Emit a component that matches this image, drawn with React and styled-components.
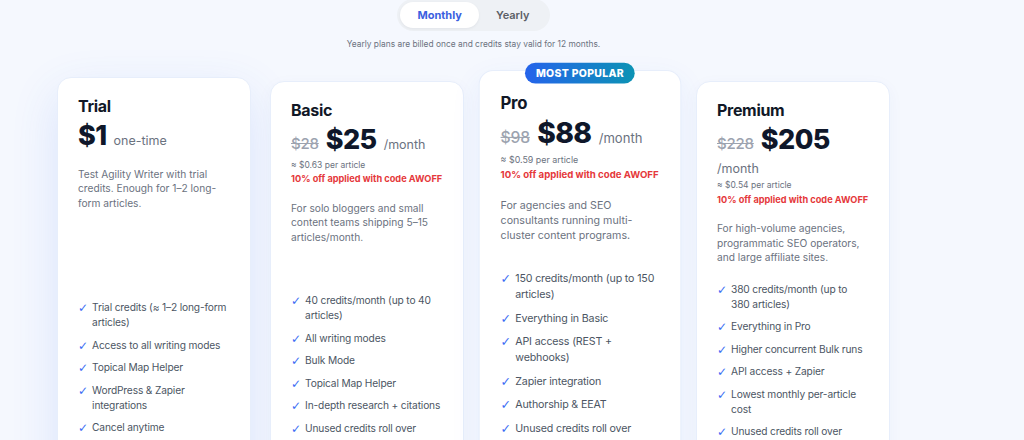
import React from 'react';
import styled, { createGlobalStyle } from 'styled-components';

const Global = createGlobalStyle`
  html, body { margin: 0; padding: 0; background: #f5f8fe; }
  body {
    font-family: Inter, "Noto Sans", sans-serif;
    -webkit-font-smoothing: antialiased;
    overflow: hidden;
  }
`;

const Page = styled.div`
  width: 1024px;
  height: 440px;
  overflow: hidden;
  background: #f5f8fe;
`;

const Main = styled.main`
  width: 833px;
  margin-left: 57px;
  display: flex;
  flex-direction: column;
  align-items: center;
`;

const Toggle = styled.div`
  display: flex;
  margin-top: -1px;
  padding: 3px;
  background: #eef1f5;
  border-radius: 16px;
`;

const ToggleBtn = styled.button`
  height: 26px;
  padding: 0 17px;
  border: none;
  border-radius: 13px;
  font-family: Inter, sans-serif;
  font-size: 11px;
  font-weight: ${p => (p.$active ? 700 : 600)};
  color: ${p => (p.$active ? '#3b5fe0' : '#5b5f66')};
  background: ${p => (p.$active ? '#ffffff' : 'transparent')};
  box-shadow: ${p => (p.$active ? '0 1px 3px rgba(15,23,42,0.06)' : 'none')};
  cursor: pointer;
`;

const Note = styled.p`
  margin: 7px 0 0;
  font-size: 8.4px;
  line-height: 12px;
  color: #6b7280;
`;

const Grid = styled.div`
  margin-top: 31px;
  display: grid;
  grid-template-columns: repeat(4, 194px);
  column-gap: 19px;
  align-items: start;
`;

const Card = styled.div`
  position: relative;
  box-sizing: border-box;
  min-height: 500px;
  display: flex;
  flex-direction: column;
  padding: ${p => (p.$featured ? '20px' : '18px')} 20px 24px;
  background: #ffffff;
  border: 1px solid #e7eefb;
  border-radius: 14px;
  transform-origin: top center;
  transform: ${p =>
    p.$featured ? 'translateY(-11px) scale(1.045)' : p.$hover ? 'translateY(-4px)' : 'none'};
  box-shadow: ${p =>
    p.$hover
      ? '0 16px 48px rgba(59,108,244,0.14)'
      : p.$featured
      ? '0 10px 30px rgba(37,99,235,0.07)'
      : '0 4px 16px rgba(30,64,175,0.04)'};
`;

const Badge = styled.span`
  position: absolute;
  top: -8px;
  left: 50%;
  transform: translateX(-50%);
  padding: 4px 10.5px;
  border-radius: 999px;
  background: linear-gradient(90deg, #2563eb 0%, #0c93b4 100%);
  color: #ffffff;
  font-size: 10px;
  line-height: 12px;
  font-weight: 800;
  letter-spacing: 0.3px;
  white-space: nowrap;
`;

const PlanName = styled.h3`
  margin: 0;
  font-size: 16px;
  line-height: 20px;
  font-weight: 700;
  letter-spacing: -0.3px;
  color: #111827;
`;

const PriceRow = styled.div`
  margin-top: 5px;
  display: flex;
  flex-wrap: wrap;
  align-items: baseline;
  column-gap: 7px;
  row-gap: 6.5px;
`;

const OldPrice = styled.span`
  font-size: 15px;
  line-height: 20px;
  font-weight: 500;
  color: #9ca3af;
  text-decoration: line-through;
  letter-spacing: -0.2px;
`;

const Price = styled.span`
  font-size: 27px;
  line-height: 30px;
  font-weight: 800;
  color: #0f172a;
  letter-spacing: -0.6px;
`;

const Unit = styled.span`
  font-size: 12.5px;
  line-height: 14px;
  color: #6b7280;
`;

const PerArticle = styled.div`
  margin-top: 3.5px;
  font-size: 8.5px;
  line-height: 12px;
  color: #6b7280;
`;

const Promo = styled.div`
  margin-top: 1.5px;
  font-size: 9.2px;
  line-height: 13px;
  font-weight: 700;
  color: #e5383b;
  white-space: nowrap;
`;

const Desc = styled.p`
  margin: 15.5px 0 0;
  font-size: 10.2px;
  line-height: 14.5px;
  color: #6b7280;
`;

const Features = styled.ul`
  list-style: none;
  margin: ${p => p.$top}px 0 0;
  padding: 0;
  display: flex;
  flex-direction: column;
  gap: 7.5px;
`;

const Feature = styled.li`
  display: flex;
  gap: 4px;
  font-size: 10.2px;
  line-height: 15px;
  letter-spacing: -0.15px;
  color: #4b5563;
`;

const Check = styled.span`
  flex: 0 0 9.5px;
  font-family: "DejaVu Sans", sans-serif;
  font-size: 12px;
  line-height: 15px;
  letter-spacing: 0;
  color: #3b6cf4;
  transform: translateY(1px);
`;

const plans = [
  {
    name: 'Trial',
    price: '$1',
    unit: 'one-time',
    desc: 'Test Agility Writer with trial credits. Enough for 1–2 long-form articles.',
    top: 90,
    hover: true,
    features: [
      'Trial credits (≈ 1–2 long-form articles)',
      'Access to all writing modes',
      'Topical Map Helper',
      'WordPress & Zapier integrations',
      'Cancel anytime',
    ],
  },
  {
    name: 'Basic',
    old: '$28',
    price: '$25',
    unit: '/month',
    per: '≈ $0.63 per article',
    promo: '10% off applied with code AWOFF',
    desc: 'For solo bloggers and small content teams shipping 5–15 articles/month.',
    top: 49,
    features: [
      '40 credits/month (up to 40 articles)',
      'All writing modes',
      'Bulk Mode',
      'Topical Map Helper',
      'In-depth research + citations',
      'Unused credits roll over',
    ],
  },
  {
    name: 'Pro',
    old: '$98',
    price: '$88',
    unit: '/month',
    per: '≈ $0.59 per article',
    promo: '10% off applied with code AWOFF',
    desc: 'For agencies and SEO consultants running multi-cluster content programs.',
    top: 27,
    featured: true,
    features: [
      '150 credits/month (up to 150 articles)',
      'Everything in Basic',
      'API access (REST + webhooks)',
      'Zapier integration',
      'Authorship & EEAT',
      'Unused credits roll over',
    ],
  },
  {
    name: 'Premium',
    old: '$228',
    price: '$205',
    unit: '/month',
    per: '≈ $0.54 per article',
    promo: '10% off applied with code AWOFF',
    desc: 'For high-volume agencies, programmatic SEO operators, and large affiliate sites.',
    top: 17,
    features: [
      '380 credits/month (up to 380\u00A0articles)',
      'Everything in Pro',
      'Higher concurrent Bulk runs',
      'API access + Zapier',
      'Lowest monthly per-article cost',
      'Unused credits roll over',
    ],
  },
];

export default function App() {
  return (
    <Page>
      <Global />
      <Main>
        <Toggle>
          <ToggleBtn $active>Monthly</ToggleBtn>
          <ToggleBtn>Yearly</ToggleBtn>
        </Toggle>
        <Note>Yearly plans are billed once and credits stay valid for 12 months.</Note>
        <Grid>
          {plans.map(p => (
            <Card key={p.name} $featured={p.featured} $hover={p.hover}>
              {p.featured && <Badge>MOST POPULAR</Badge>}
              <PlanName>{p.name}</PlanName>
              <PriceRow>
                {p.old && <OldPrice>{p.old}</OldPrice>}
                <Price>{p.price}</Price>
                <Unit>{p.unit}</Unit>
              </PriceRow>
              {p.per && <PerArticle>{p.per}</PerArticle>}
              {p.promo && <Promo>{p.promo}</Promo>}
              <Desc>{p.desc}</Desc>
              <Features $top={p.top}>
                {p.features.map(f => (
                  <Feature key={f}>
                    <Check>✓</Check>
                    <span>{f}</span>
                  </Feature>
                ))}
              </Features>
            </Card>
          ))}
        </Grid>
      </Main>
    </Page>
  );
}
